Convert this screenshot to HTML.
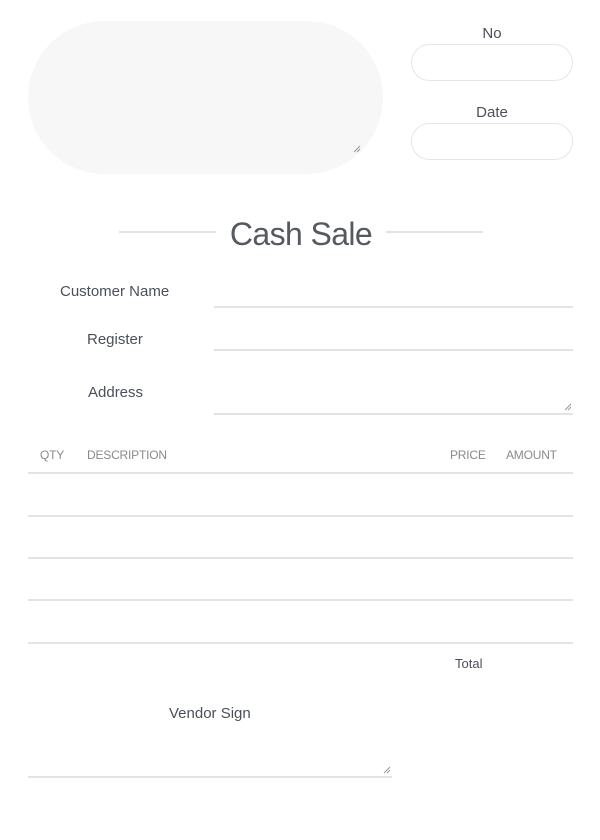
<!DOCTYPE html>
<html><head><meta charset="utf-8"><style>
*{margin:0;padding:0;box-sizing:border-box}
body{width:600px;height:840px;background:#fff;position:relative;font-family:"Liberation Sans",sans-serif;overflow:hidden}
.a{position:absolute;white-space:nowrap}
.t{font-size:15px;color:#4a4f5a;line-height:18px}
.h{font-size:12px;color:#8a8a8a;line-height:16px;letter-spacing:-0.2px}
.l{position:absolute;height:2px;background:#e3e3e3}
.box{position:absolute;border:1px solid #e6e6e6;border-radius:19px;background:#fff}
.grip{position:absolute;width:8px;height:8px}
</style></head><body>
<div class="a" style="left:28px;top:21px;width:355px;height:153px;border-radius:77px;background:#f7f7f7"></div>
<svg class="grip" style="left:353px;top:145px" viewBox="0 0 8 8"><path d="M1 7L7 1M4 7L7 4" stroke="#999" stroke-width="1"/></svg>
<div class="a t" style="left:411px;width:162px;text-align:center;top:25px">No</div>
<div class="box" style="left:411px;top:44px;width:162px;height:37px"></div>
<div class="a t" style="left:411px;width:162px;text-align:center;top:104px">Date</div>
<div class="box" style="left:411px;top:123px;width:162px;height:37px"></div>
<div class="l" style="left:119px;top:231px;width:97px"></div>
<div class="l" style="left:386px;top:231px;width:97px"></div>
<div class="a" style="left:216px;width:170px;text-align:center;top:214px;font-size:32px;letter-spacing:-0.6px;color:#555a60;line-height:40px">Cash Sale</div>
<div class="a t" style="left:60px;top:283px">Customer Name</div>
<div class="l" style="left:214px;top:306px;width:359px"></div>
<div class="a t" style="left:87px;top:331px">Register</div>
<div class="l" style="left:214px;top:349px;width:359px"></div>
<div class="a t" style="left:88px;top:384px">Address</div>
<div class="l" style="left:214px;top:413px;width:359px"></div>
<svg class="grip" style="left:564px;top:403px" viewBox="0 0 8 8"><path d="M1 7L7 1M4 7L7 4" stroke="#999" stroke-width="1"/></svg>
<div class="a h" style="left:40px;top:447px">QTY</div>
<div class="a h" style="left:87px;top:447px">DESCRIPTION</div>
<div class="a h" style="left:450px;top:447px">PRICE</div>
<div class="a h" style="left:506px;top:447px">AMOUNT</div>
<div class="l" style="left:28px;top:472px;width:545px"></div>
<div class="l" style="left:28px;top:515px;width:545px"></div>
<div class="l" style="left:28px;top:557px;width:545px"></div>
<div class="l" style="left:28px;top:599px;width:545px"></div>
<div class="l" style="left:28px;top:642px;width:545px"></div>
<div class="a" style="left:455px;top:656px;font-size:13px;color:#4a4f5a">Total</div>
<div class="a t" style="left:169px;top:705px">Vendor Sign</div>
<div class="l" style="left:28px;top:776px;width:364px"></div>
<svg class="grip" style="left:383px;top:766px" viewBox="0 0 8 8"><path d="M1 7L7 1M4 7L7 4" stroke="#999" stroke-width="1"/></svg>
</body></html>
